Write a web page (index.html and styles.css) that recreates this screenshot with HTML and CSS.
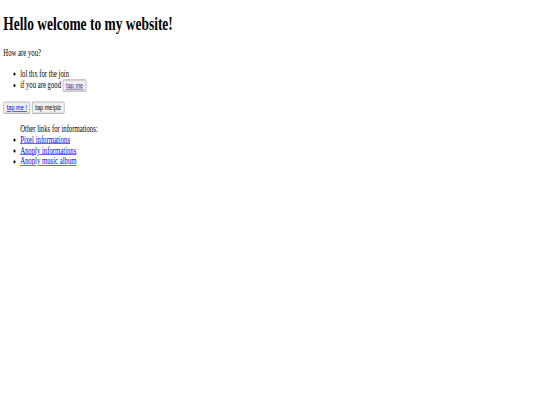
FILE: index.html
```html
<!DOCTYPE html>
<html>
<head>
<meta charset="utf-8">
<link rel="stylesheet" href="styles.css">
</head>
<body>
<div class="page">
  <h1 class="title">Hello welcome to my website!</h1>
  <p class="question">How are you?</p>
  <ul class="answers">
    <li>lol thx for the join</li>
    <li>if you are good <button class="btn"><a class="link link-visited" href="#">tap me</a></button></li>
  </ul>
  <div class="actions">
    <button class="btn"><a class="link" href="#">tap me !</a></button>
    <button class="btn">tap me!plz</button>
  </div>
  <ul class="links">
    <span class="links-title">Other links for informations:</span>
    <li><a class="link" href="#">Pixel informations</a></li>
    <li><a class="link" href="#">Anoply informations</a></li>
    <li><a class="link" href="#">Anoply music album</a></li>
  </ul>
</div>
</body>
</html>
```
FILE: styles.css
```css
html, body {
  margin: 0;
  background: #ffffff;
  overflow: hidden;
}
body {
  font-family: "Liberation Serif", "Times New Roman", serif;
  font-size: 16px;
  color: #000000;
}
.page {
  display: flow-root;
  padding: 0 8px;
  transform: scale(0.42, 0.6);
  transform-origin: 0 0;
}
.title {
  font-size: 32px;
  font-weight: bold;
  margin: 21.44px 0;
  white-space: nowrap;
}
.question {
  margin: 16px 0;
}
.answers, .links {
  margin: 16px 0;
  padding-left: 40px;
}
.links-title {
  display: block;
}
.actions {
  display: flex;
  gap: 4px;
}
.btn {
  font-family: "Liberation Sans", Arial, sans-serif;
  font-size: 13.333px;
  padding: 1px 6px;
  background: #efefef;
  border: 2px solid #b8b8b8;
  border-radius: 3px;
  color: #000000;
}
.link {
  color: #0000ee;
  text-decoration: underline;
}
.link-visited {
  color: #551a8b;
}
```
